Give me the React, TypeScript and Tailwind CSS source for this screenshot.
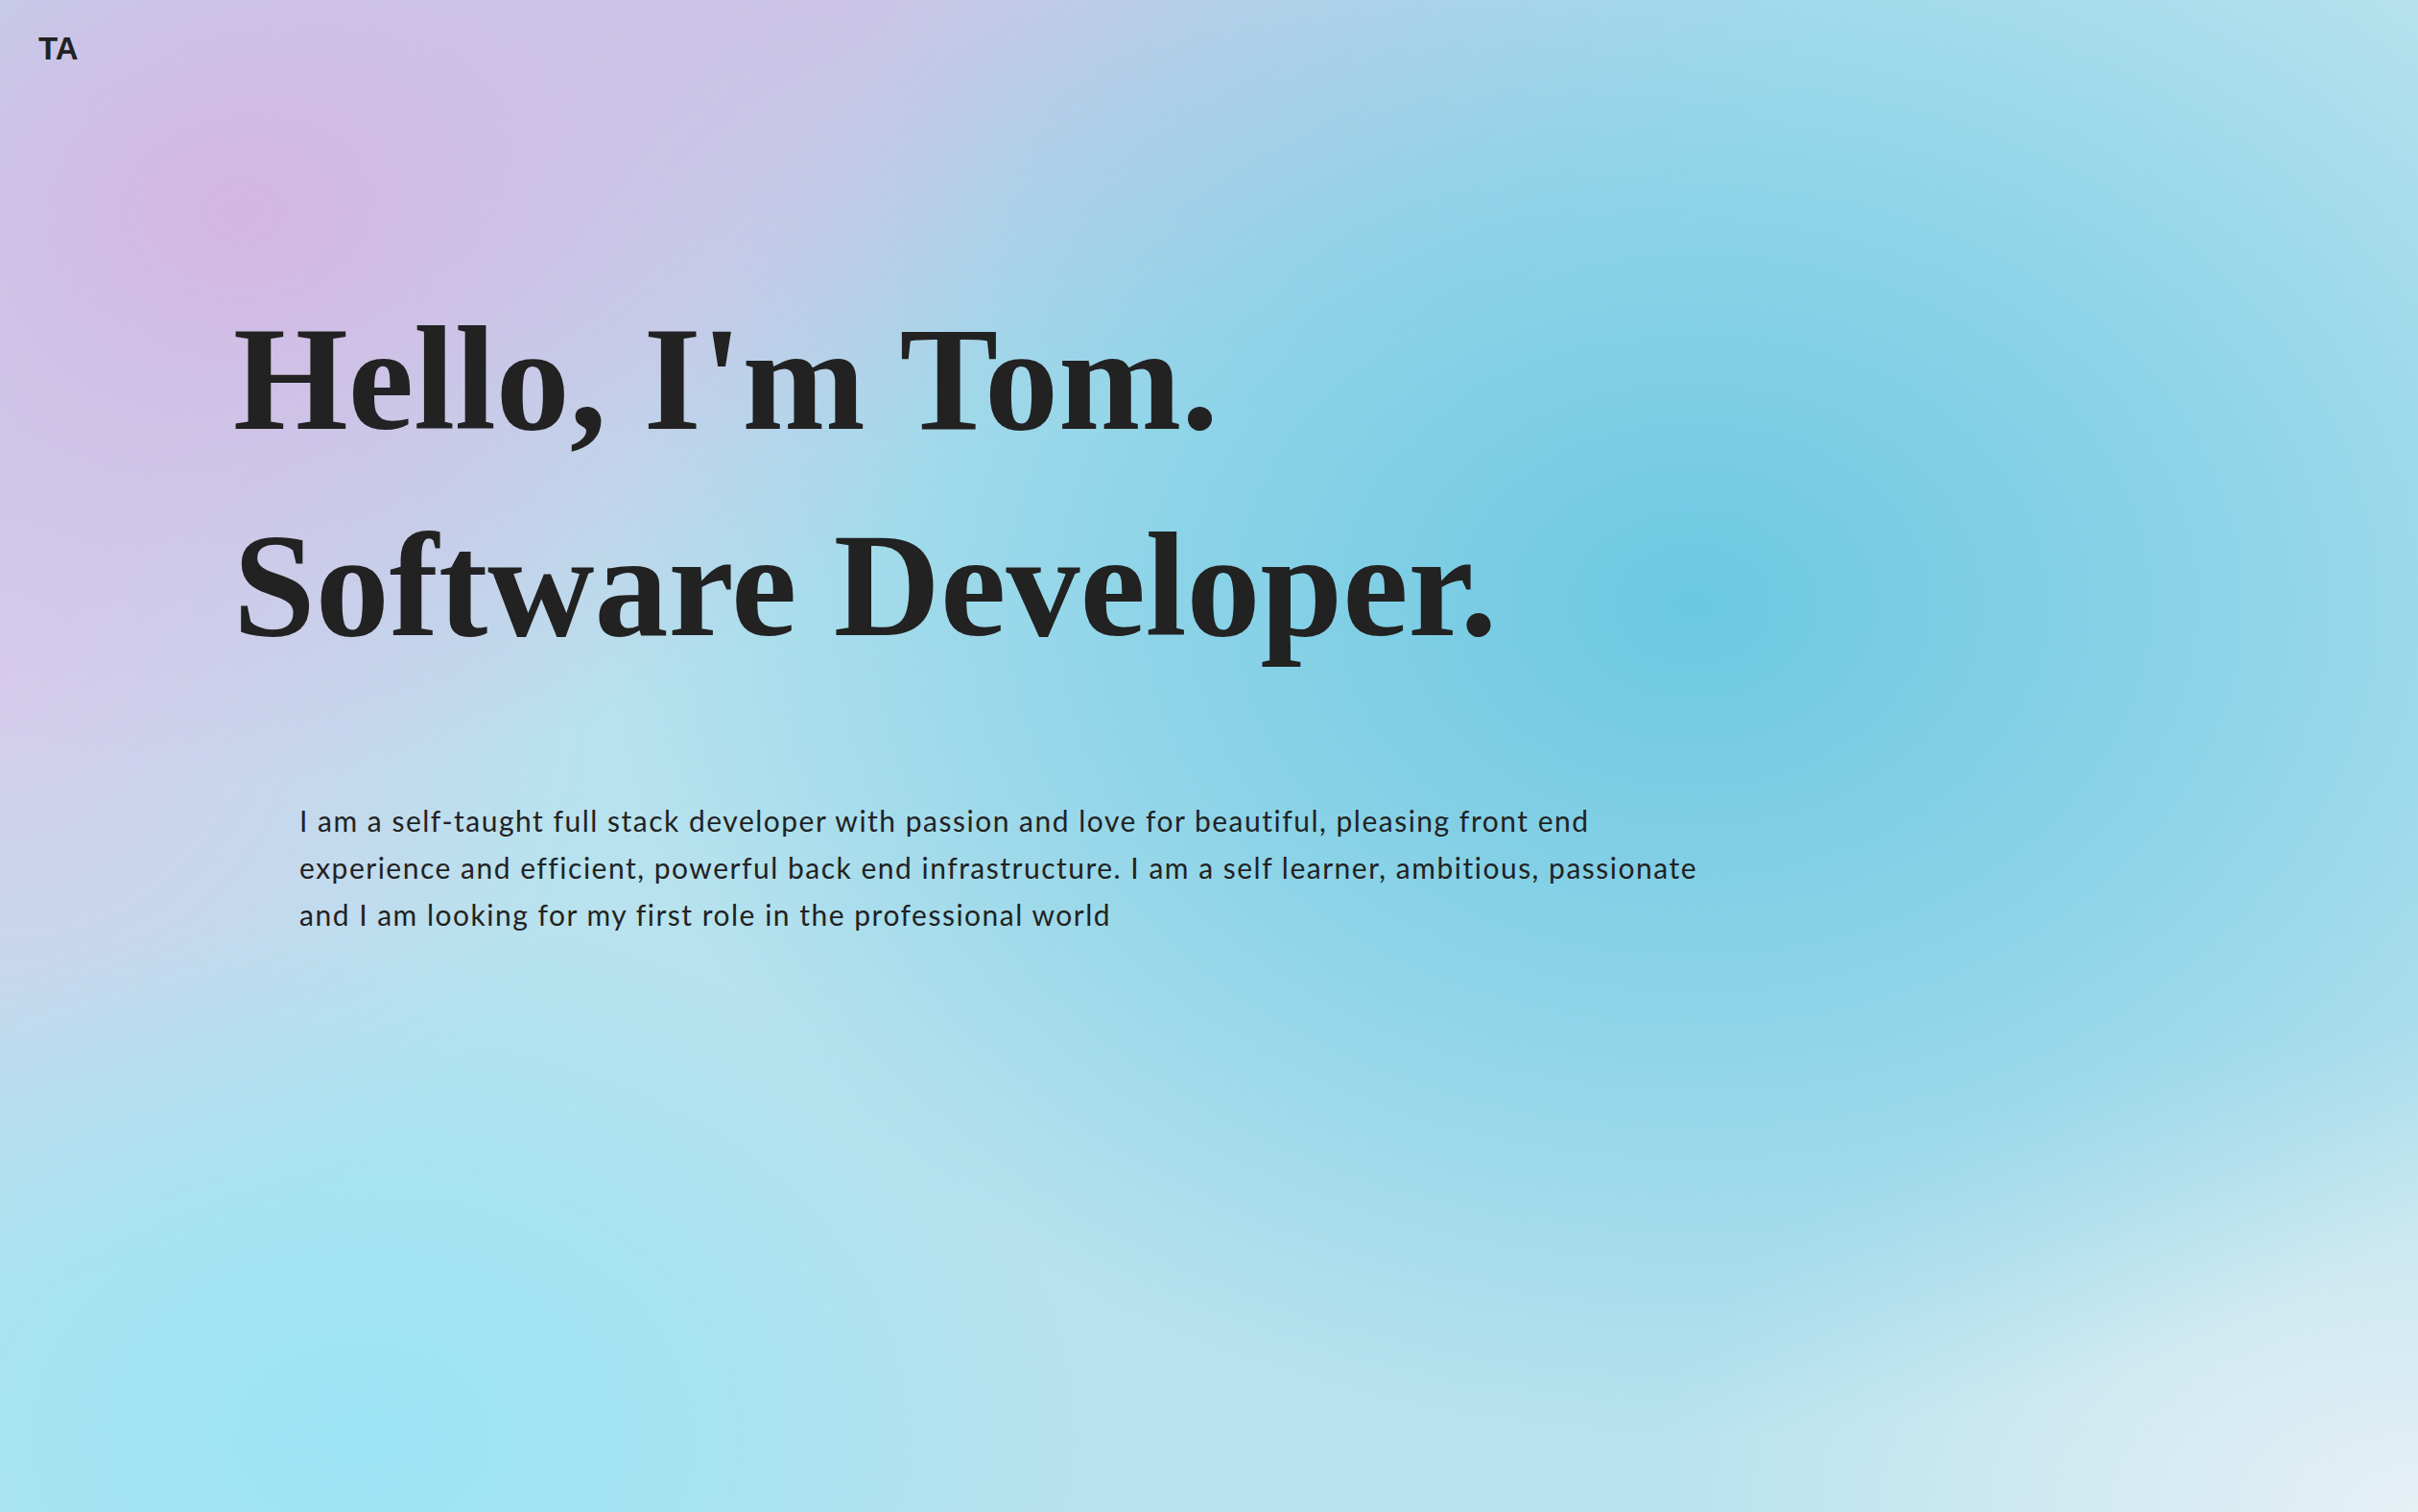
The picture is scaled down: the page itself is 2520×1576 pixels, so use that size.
import React from 'react';

const intro =
  'I am a self-taught full stack developer with passion and love for beautiful, pleasing front end experience and efficient, powerful back end infrastructure. I am a self learner, ambitious, passionate and I am looking for my first role in the professional world';

export default function App(): JSX.Element {
  return (
    <div className="relative min-h-[1576px] w-full overflow-hidden bg-[#b7e2ee] bg-[image:radial-gradient(ellipse_32%_38%_at_10%_14%,#d5b6e3_0%,rgba(213,182,227,0.6)_40%,transparent_100%),radial-gradient(ellipse_45%_55%_at_70%_40%,#6cc8e2_0%,rgba(108,200,226,0.6)_45%,transparent_100%),radial-gradient(ellipse_30%_35%_at_15%_95%,#9ce4f4_0%,rgba(156,228,244,0.6)_45%,transparent_100%),radial-gradient(ellipse_32%_32%_at_100%_100%,#e6f0f5_0%,rgba(230,240,245,0.6)_40%,transparent_100%),radial-gradient(ellipse_25%_40%_at_0%_45%,#d6cdec_0%,transparent_100%),radial-gradient(ellipse_40%_30%_at_35%_0%,#c9c5e6_0%,transparent_100%)] text-[#222222]">
      {/* logo */}
      <header className="pl-10 pt-8">
        <span className="text-[33px] leading-[38px] font-bold font-['Liberation_Sans',Arial,sans-serif]">TA</span>
      </header>

      <main className="pl-[243px] pt-[218px]">
        <h1 className="text-[154px] leading-[215px] font-bold font-['Liberation_Serif','Times_New_Roman',serif]">
          Hello, I'm Tom.
          <br />
          Software Developer.
        </h1>

        <p className="ml-[69px] mt-[113px] max-w-[1490px] text-[30px] leading-[49px] tracking-[1.5px] font-['Lato','Open_Sans',sans-serif]">
          {intro}
        </p>
      </main>
    </div>
  );
}
